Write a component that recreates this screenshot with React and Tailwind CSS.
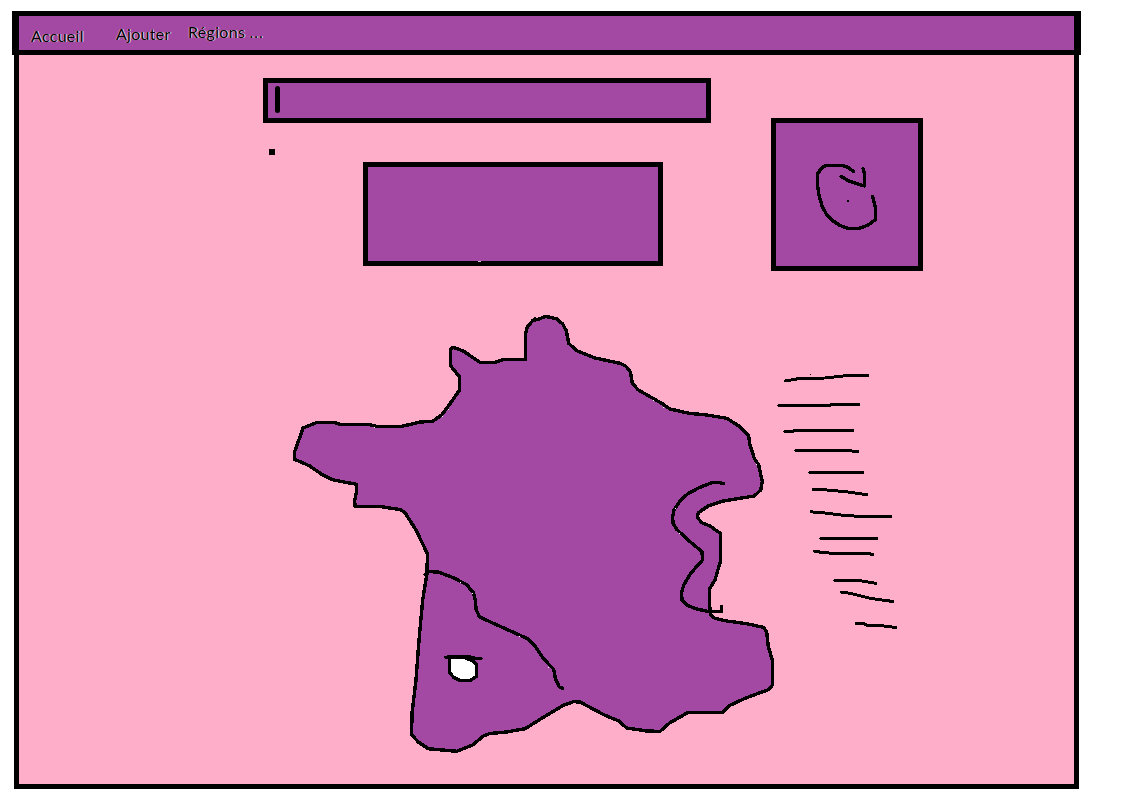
import React from "react";

const OUTLINE =
  "525.7,359.3 525.7,333 527.3,326.7 532.7,320.7 536.7,319.7 546,316.4 556.7,319 562.7,324 566.3,330.7 568.7,343.3 576.7,350.7 595,358 620,363.3 625.7,366 630.3,371.7 632.3,383.3 638.3,390 661.7,403.3 670,409 690,413.5 705,414.7 726.7,418.3 740,426.7 748.7,436 750,445 754.3,458.3 758.7,465 762.3,481.7 760.7,490 754.3,496 723.3,501 708.3,506 698.3,512.7 697.3,517.3 701.7,522.7 710,526 720.3,533.3 720.3,561.7 715,580 709.4,589.3 709.4,603.3 710.7,615 715,618.3 726.7,621 746.7,623.7 763.3,627.3 766.7,631.7 768.3,646.7 772.3,660 772.3,685 769.3,689.3 745,698.3 730,705.3 722.7,712.3 688.3,712.3 670,722.7 660,731.4 646.7,731 626.7,728 618.3,720.7 605,715.3 580,702 573.3,701.7 563.3,705.3 543.3,717.3 525,728.7 506.7,732 490,733.5 482.7,736.3 473.3,744.7 456.7,751.3 428.3,748.7 418.3,742 411.6,734.7 412,713.3 416,680 419,640 422.7,600 427,573.3 427.4,554 424.3,547.3 416,530 405,512.7 400.7,509.7 380,506.5 355,506.4 354.7,500 356.6,491.7 356.6,484.3 333.3,480 321.7,474.3 309.3,465.7 294.6,459.3 294.6,451.7 300,436.7 303,428 316.7,422.6 335,422.6 340,424.4 368.3,424.4 376.7,426.4 401.7,426.4 420,422 432.3,421.4 441.7,415 447,408 459.6,390 459.4,376.7 450.6,365.7 450.6,349.3 453.3,347.3 463.3,351 480,362.4 495,362.4 503.3,359.5";

const BORDERS = [
  "723.3,483.7 718.3,482.4 711.7,482.7 700,487.3 688.3,493.3 680,501 674,510 672.6,517 673,523.3 676.7,529.3 688,540 702,551.7 702.5,560 690.7,573.3 683.7,585 681.5,593 682,600 687,605.3 696.7,609 708,611.4 721.5,611.5 721.5,606.7",
  "425,574.5 428.3,571.6 438.3,572 453.3,577.7 466.7,584.7 473.3,592.7 475.4,600 476,609 479.3,616.7 493.3,623.3 528.3,639 535,646 544,659.3 553.7,669.3 555.3,678.3 559.3,687 562.7,688.3",
];

const LIST_LINES = [
  "785,381 799,378.6 825,378 843,376 868,375.5",
  "779,405.5 830,405.5 831,404.5 859,404.5",
  "785,431.5 793,431.3 794,430.5 853,430.5",
  "796,450.5 851,450.5 853,451.4 858,451.5",
  "810,472.5 863,472.5",
  "813,489.3 822,489.5 848,492 867,494.7",
  "811,511.8 825,513 843,515.3 862,516.5 891,516.5",
  "821,538.5 877,538.5",
  "814,551 821,552.3 835,553.5 868,553.5 873,554.5",
  "835,580.5 859,580.5 876,583.3",
  "841,592 851,593.5 870,598.3 893,601.5",
  "856,623.5 864,623.7 867,625.3 880,625.5 896,627.5",
];

const SPECKS = [
  [448, 409], [442, 416], [374, 427], [653, 400], [663, 407], [675, 508],
  [460, 582], [472, 593], [519, 636], [548, 667], [756, 464], [679, 533],
];

function Header() {
  return (
    <nav className="ml-3 flex h-[44px] w-[1069px] items-start border-x-[7px] border-y-[5px] border-black bg-[#a349a4] pl-3 font-['Lato',sans-serif] text-[16px] leading-5 tracking-[0.3px] text-black [text-shadow:1px_0_0_rgba(255,255,255,0.8),-1px_0_0_rgba(255,240,200,0.35)]">
      <a className="mt-[10px] w-[85px]">Accueil</a>
      <a className="mt-2 w-[72px]">Ajouter</a>
      <a className="mt-[6px]">
        Régions <span className="tracking-[0.9px]">...</span>
      </a>
    </nav>
  );
}

function RefreshPanel() {
  return (
    <button className="mt-[63px] ml-[60px] h-[153px] w-[152px] border-[5px] border-black bg-[#a349a4]">
      <svg
        viewBox="776 123 142 143"
        className="block h-[143px] w-[142px]"
        fill="none"
        stroke="#000"
        strokeWidth="3.4"
        strokeLinecap="round"
        strokeLinejoin="round"
        shapeRendering="crispEdges"
      >
        <polyline points="853.5,171.5 848,167.5 843,165.5 826,165.5 821.5,168 817.5,174 817.5,185 819,195 822,206 826,213.5 831,219.5 840,225.5 848,228.5 859,228.5 868,225 875.5,219.5 875.5,208 872.5,196.5" />
        <polyline points="841,176.5 850,181.5 864.5,186 864.5,174 863,168.5" />
        <rect x="847" y="200" width="2" height="2" fill="#000" stroke="none" />
      </svg>
    </button>
  );
}

function RegionMap() {
  return (
    <svg
      viewBox="290 310 485 450"
      className="block h-[450px] w-[485px] shrink-0"
      fill="none"
      stroke="#000"
      strokeWidth="3.4"
      strokeLinecap="round"
      strokeLinejoin="round"
      shapeRendering="crispEdges"
    >
      <polygon points={OUTLINE} fill="#a349a4" />
      <polyline points="533,320.5 535,319" />
      {BORDERS.map((points) => (
        <polyline key={points} points={points} />
      ))}
      <polygon
        fill="#fff"
        points="449.4,658 449.4,672 453.3,677 460,680.5 470,680.5 476.5,676.5 476.5,664.5 472,660.5 464,657.4 452,657.4"
      />
      <polyline points="446,657.5 450,656.6 469,656.6 475,658.4 481,658.5" />
      <g fill="#fff" stroke="none">
        {SPECKS.map(([x, y]) => (
          <rect key={`${x}-${y}`} x={x} y={y} width="1" height="1" />
        ))}
      </g>
    </svg>
  );
}

function RegionList() {
  return (
    <svg
      viewBox="775 310 130 450"
      className="block h-[450px] w-[130px] shrink-0"
      fill="none"
      stroke="#000"
      strokeWidth="3"
      strokeLinecap="round"
      strokeLinejoin="round"
      shapeRendering="crispEdges"
    >
      {LIST_LINES.map((points) => (
        <polyline key={points} points={points} />
      ))}
      <rect x="810" y="374" width="1" height="1" fill="#000" stroke="none" />
    </svg>
  );
}

export default function App() {
  return (
    <div className="h-[806px] overflow-hidden bg-white pt-[11px]">
      <Header />
      <main className="ml-[14px] flex h-[734px] w-[1065px] flex-col border-x-[5px] border-b-[5px] border-black bg-[#ffaec9]">
        <section className="flex h-[255px] items-start pl-[244px]">
          <div className="w-[448px] pt-[23px]">
            <div className="flex h-[45px] items-start border-[5px] border-black bg-[#a349a4] pt-[3px] pl-[7px]">
              <span className="h-[27px] w-[5px] rounded-full bg-black" />
            </div>
            <div className="mt-[26px] ml-[6px] size-[6px] bg-black" />
            <div className="mt-[7px] ml-[100px] flex h-[104px] w-[300px] items-end border-[5px] border-black bg-[#a349a4] pl-[110px]">
              <span className="-mb-px h-px w-[3px] bg-[#dcb8dc]" />
            </div>
          </div>
          <RefreshPanel />
        </section>
        <section className="flex pl-[271px]">
          <RegionMap />
          <RegionList />
        </section>
      </main>
    </div>
  );
}
